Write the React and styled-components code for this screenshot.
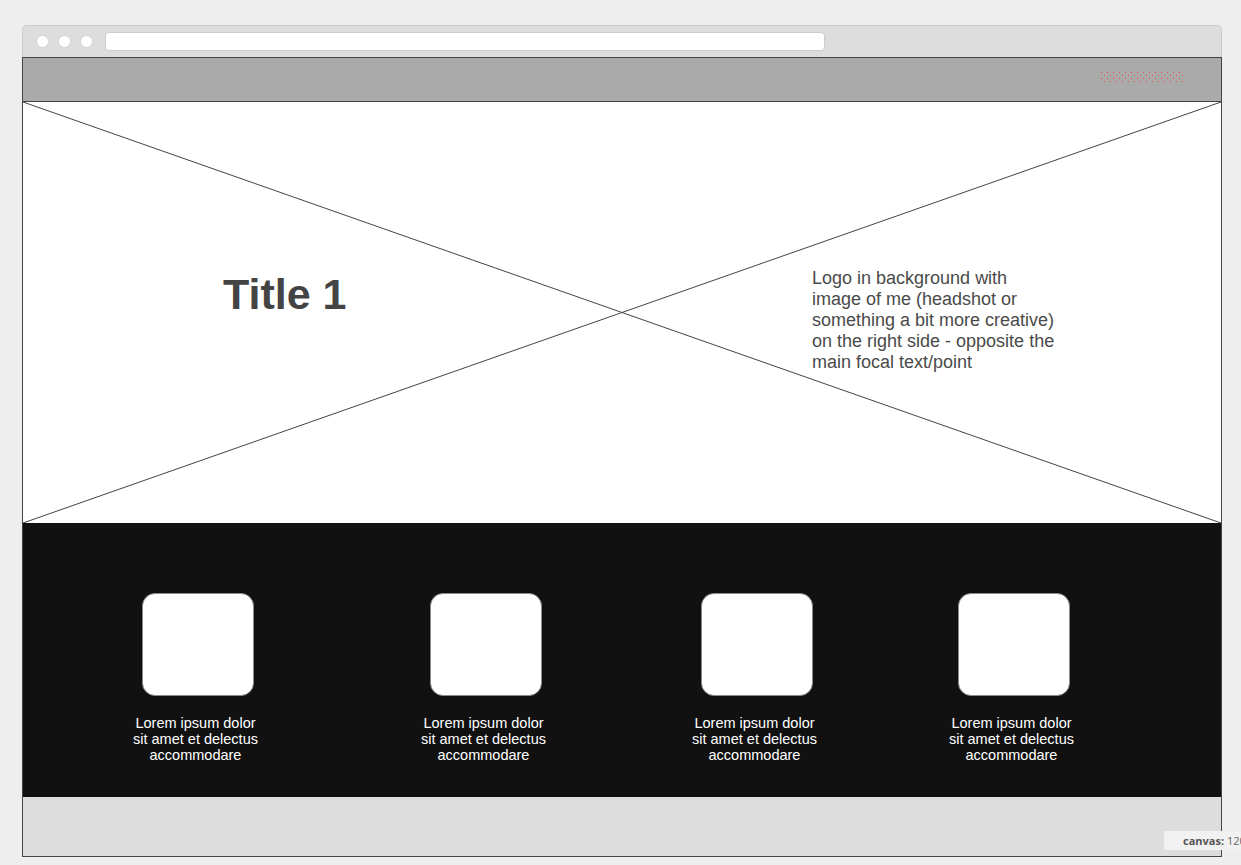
import React from "react";
import styled, { createGlobalStyle } from "styled-components";

const features = [
  { id: 1, offset: 110 },
  { id: 2, offset: 158 },
  { id: 3, offset: 141 },
  { id: 4, offset: 127 },
];

const noteLines = [
  "Logo in background with",
  "image of me (headshot or",
  "something a bit more creative)",
  "on the right side - opposite the",
  "main focal text/point",
];

function RedDots() {
  return (
    <DotsSvg width="84" height="10" viewBox="0 0 84 10">
      <defs>
        <pattern id="dots" width="6" height="6" patternUnits="userSpaceOnUse">
          <rect x="0" y="0" width="1" height="1" fill="#f24a3d" />
          <rect x="3" y="3" width="1" height="1" fill="#f24a3d" />
        </pattern>
      </defs>
      <rect x="0" y="0" width="84" height="10" fill="url(#dots)" />
    </DotsSvg>
  );
}

function App() {
  return (
    <>
      <GlobalStyle />
      <Page>
        <Frame>
          <TitleBar>
            <Dot />
            <Dot />
            <Dot />
            <UrlBar />
          </TitleBar>
          <Header>
            <RedDots />
          </Header>
          <Hero>
            <Cross viewBox="0 0 100 100" preserveAspectRatio="none">
              <line x1="0" y1="0" x2="100" y2="100" vectorEffect="non-scaling-stroke" />
              <line x1="100" y1="0" x2="0" y2="100" vectorEffect="non-scaling-stroke" />
            </Cross>
            <Title>Title 1</Title>
            <Note>
              {noteLines.map((line) => (
                <span key={line}>{line}</span>
              ))}
            </Note>
          </Hero>
          <Features>
            {features.map((f) => (
              <Feature key={f.id} $offset={f.offset}>
                <Tile />
                <Caption>
                  Lorem ipsum dolor
                  <br />
                  sit amet et delectus
                  <br />
                  accommodare
                </Caption>
              </Feature>
            ))}
          </Features>
          <Footer />
        </Frame>
        <CanvasLabel>
          <b>canvas:</b> 1200
        </CanvasLabel>
      </Page>
    </>
  );
}

const GlobalStyle = createGlobalStyle`
  html, body {
    margin: 0;
    padding: 0;
    background: #eeeeee;
    overflow: hidden;
  }
  body {
    font-family: "Liberation Sans", Arial, sans-serif;
  }
`;

const Page = styled.div`
  position: relative;
  width: 1241px;
  height: 865px;
  padding: 25px 0 0 22px;
  box-sizing: border-box;
`;

const Frame = styled.div`
  width: 1200px;
  display: flex;
  flex-direction: column;
`;

const TitleBar = styled.div`
  height: 32px;
  box-sizing: border-box;
  background: #dddddd;
  border: 1px solid #cccccc;
  border-bottom: none;
  border-radius: 5px 5px 0 0;
  display: flex;
  align-items: center;
  padding: 0 0 0 13px;
  gap: 9px;
`;

const Dot = styled.span`
  flex-shrink: 0;
  width: 13px;
  height: 13px;
  border-radius: 50%;
  background: #ffffff;
  border: 1px solid #d4d4d4;
  box-sizing: border-box;
`;

const UrlBar = styled.span`
  flex-shrink: 0;
  margin-left: 3px;
  width: 720px;
  height: 19px;
  box-sizing: border-box;
  background: #ffffff;
  border: 1px solid #cccccc;
  border-radius: 4px;
`;

const Header = styled.div`
  height: 45px;
  box-sizing: border-box;
  background: #aaaaaa;
  border: 1px solid #444444;
  display: flex;
  justify-content: flex-end;
  align-items: flex-start;
  padding: 14px 36px 0 0;
`;

const DotsSvg = styled.svg`
  display: block;
`;

const Hero = styled.div`
  position: relative;
  height: 421px;
  box-sizing: border-box;
  background: #ffffff;
  border-left: 1px solid #444444;
  border-right: 1px solid #444444;
  display: grid;
  grid-template-columns: 589px 260px;
  align-items: start;
  padding: 167px 0 0 200px;
`;

const Cross = styled.svg`
  position: absolute;
  inset: 0;
  width: 100%;
  height: 100%;

  line {
    stroke: #444444;
    stroke-width: 1;
  }
`;

const Title = styled.h1`
  position: relative;
  margin: 1px 0 0;
  font-size: 43px;
  line-height: 48px;
  font-weight: 700;
  color: #444444;
`;

const Note = styled.p`
  position: relative;
  margin: -1px 0 0;
  display: flex;
  flex-direction: column;
  font-size: 18px;
  line-height: 21px;
  color: #4a4a4a;
  white-space: nowrap;
`;

const Features = styled.div`
  height: 274px;
  box-sizing: border-box;
  background: #111111;
  border-left: 1px solid #444444;
  border-right: 1px solid #444444;
  display: flex;
  align-items: flex-start;
  padding-top: 70px;
`;

const Feature = styled.div`
  width: 130px;
  margin-left: ${(p) => p.$offset}px;
  display: flex;
  flex-direction: column;
  align-items: center;
  gap: 19px;
`;

const Tile = styled.div`
  width: 112px;
  height: 103px;
  box-sizing: border-box;
  background: #ffffff;
  border: 1px solid #8a8a8a;
  border-radius: 13px;
`;

const Caption = styled.p`
  margin: 0 5px 0 0;
  font-size: 14.5px;
  line-height: 16px;
  color: #ffffff;
  text-align: center;
  white-space: nowrap;
`;

const Footer = styled.div`
  height: 60px;
  box-sizing: border-box;
  background: #dddddd;
  border: 1px solid #444444;
  border-top: none;
`;

const CanvasLabel = styled.div`
  position: absolute;
  left: 1164px;
  top: 831px;
  width: 77px;
  height: 19px;
  overflow: hidden;
  box-sizing: border-box;
  padding-left: 19px;
  background: #f1f1f1;
  font-family: "Open Sans", "Liberation Sans", sans-serif;
  font-size: 11px;
  line-height: 19px;
  color: #666666;
  white-space: nowrap;

  b {
    color: #555555;
  }
`;

export default App;
